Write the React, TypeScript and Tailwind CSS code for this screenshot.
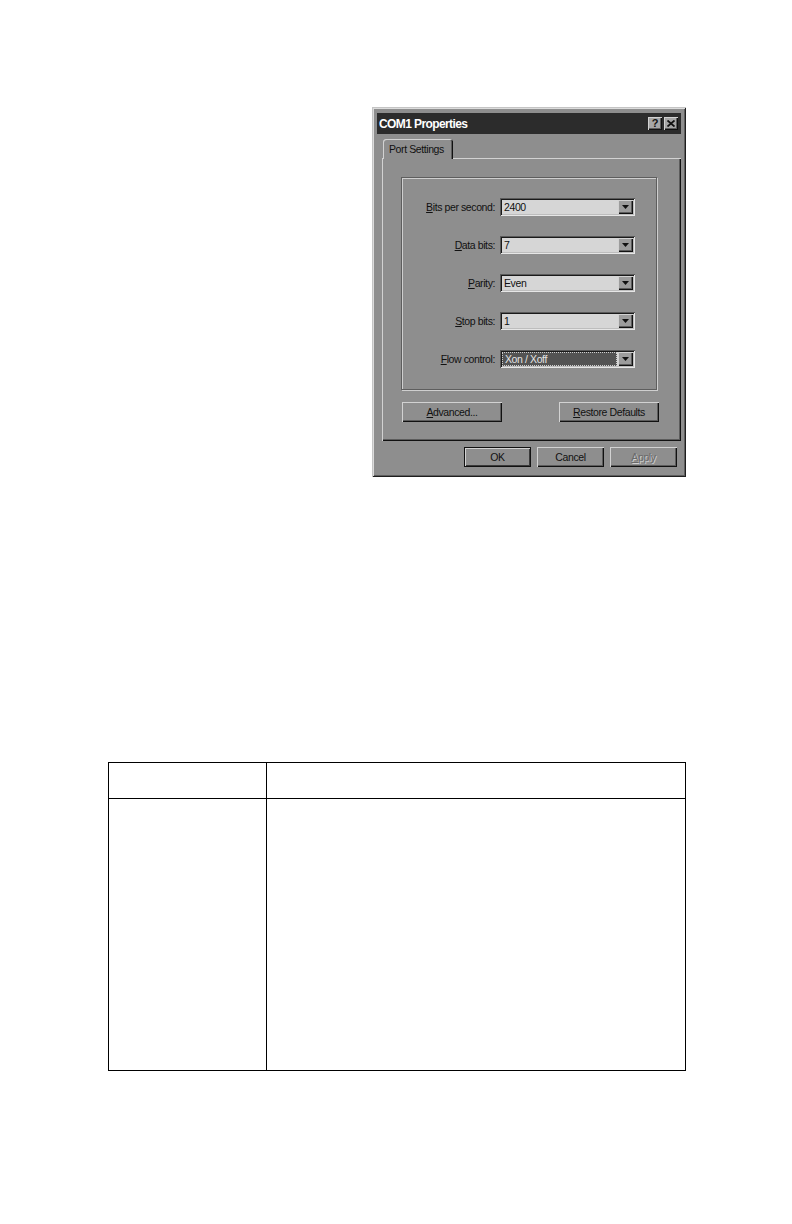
import React from 'react';

const font = "font-['Liberation_Sans',Arial,sans-serif]";

const raised =
  'shadow-[inset_1px_1px_0_#d2d2d2,inset_-1px_-1px_0_#111111,inset_-2px_-2px_0_#5c5c5c]';
const sunken =
  'shadow-[inset_1px_1px_0_#5a5a5a,inset_-1px_-1px_0_#e6e6e6,inset_2px_2px_0_#1a1a1a,inset_-2px_-2px_0_#bdbdbd]';

const Combo: React.FC<{ value: string; focused?: boolean }> = ({ value, focused }) => (
  <div className={`relative w-[135px] h-[18px] bg-[#d6d6d6] ${sunken} flex items-center`}>
    {focused ? (
      <div className="ml-[2px] h-[14px] w-[115px] bg-[#535353] border border-dotted border-[#cfcfcf] flex items-center pl-[2px] text-[#e4e4e4]">
        {value}
      </div>
    ) : (
      <span className="pl-[4px] text-[#111]">{value}</span>
    )}
    <div className={`absolute right-[2px] top-[2px] w-[15px] h-[14px] bg-[#9c9c9c] ${raised} flex items-center justify-center`}>
      <svg width="7" height="4" viewBox="0 0 7 4">
        <path d="M0 0h7L3.5 4z" fill="#111" />
      </svg>
    </div>
  </div>
);

const Row: React.FC<{ label: React.ReactNode; value: string; focused?: boolean }> = ({ label, value, focused }) => (
  <div className="flex items-center h-[18px]">
    <div className="w-[94px] text-right pr-[1px] text-[#111]">{label}</div>
    <div className="ml-[4px]">
      <Combo value={value} focused={focused} />
    </div>
  </div>
);

const Btn: React.FC<{ children: React.ReactNode; w: string; def?: boolean; disabled?: boolean }> = ({ children, w, def, disabled }) => (
  <div
    className={`${w} h-[20px] flex items-center justify-center bg-[#8e8e8e] ${
      def
        ? 'shadow-[inset_0_0_0_1px_#111111,inset_2px_2px_0_#d2d2d2,inset_-2px_-2px_0_#3a3a3a]'
        : raised
    } ${disabled ? 'text-[#6a6a6a] [text-shadow:1px_1px_0_#cfcfcf]' : 'text-[#111]'}`}
  >
    {children}
  </div>
);

export default function App() {
  return (
    <div className="w-[792px] h-[1224px] bg-white overflow-hidden">
      <div className="ml-[372px] pt-[107px]">
        <div
          className={`w-[314px] h-[370px] bg-[#8e8e8e] ${font} text-[10.5px] tracking-[-0.4px] leading-none shadow-[inset_1px_1px_0_#c4c4c4,inset_-1px_-1px_0_#1e1e1e,inset_2px_2px_0_#dcdcdc,inset_-2px_-2px_0_#5e5e5e] flex flex-col`}
        >
          {/* title bar */}
          <div className="mt-[6px] mx-[5px] h-[21px] bg-[#2c2c2c] flex items-center justify-between pl-[2px] pr-[3px]">
            <span className="text-white font-bold text-[12px] tracking-[-0.6px]">COM1 Properties</span>
            <div className="flex gap-[2px]">
              <div className={`w-[14px] h-[13px] bg-[#a6a6a6] ${raised} flex items-center justify-center text-[11px] font-bold text-[#111] tracking-normal`}>?</div>
              <div className={`w-[14px] h-[13px] bg-[#a6a6a6] ${raised} flex items-center justify-center`}>
                <svg width="8" height="7" viewBox="0 0 8 7">
                  <path d="M0.5 0.5L7.5 6.5M7.5 0.5L0.5 6.5" stroke="#111" strokeWidth="1.8" />
                </svg>
              </div>
            </div>
          </div>

          {/* tab */}
          <div className="mt-[5px] ml-[11px] relative z-10 -mb-[1px]">
            <div className="w-[70px] h-[20px] bg-[#8e8e8e] rounded-t-[3px] shadow-[inset_1px_1px_0_#d2d2d2,inset_-1px_0_0_#111111,inset_-2px_0_0_#5c5c5c] flex items-center pl-[6px] text-[#111]">
              Port Settings
            </div>
          </div>

          {/* panel */}
          <div className="ml-[10px] w-[299px] h-[283px] shadow-[inset_1px_1px_0_#d2d2d2,inset_-1px_-1px_0_#111111,inset_-2px_-2px_0_#5c5c5c] pt-[19px]">
            <div className="ml-[19px] w-[256px] h-[213px] border border-[#5e5e5e] shadow-[1px_1px_0_#cfcfcf,inset_1px_1px_0_#cfcfcf] flex flex-col gap-[20px] pt-[20px]">
              <Row label={<><u>B</u>its per second:</>} value="2400" />
              <Row label={<><u>D</u>ata bits:</>} value="7" />
              <Row label={<><u>P</u>arity:</>} value="Even" />
              <Row label={<><u>S</u>top bits:</>} value="1" />
              <Row label={<><u>F</u>low control:</>} value="Xon / Xoff" focused />
            </div>
            <div className="mt-[12px] pl-[20px] pr-[22px] flex justify-between">
              <Btn w="w-[100px]"><span><u>A</u>dvanced...</span></Btn>
              <Btn w="w-[100px]"><span><u>R</u>estore Defaults</span></Btn>
            </div>
          </div>

          {/* bottom buttons */}
          <div className="mt-[6px] pr-[9px] flex justify-end gap-[6px]">
            <Btn w="w-[67px]" def>OK</Btn>
            <Btn w="w-[67px]">Cancel</Btn>
            <Btn w="w-[67px]" disabled><span><u>A</u>pply</span></Btn>
          </div>
        </div>
      </div>

      {/* table */}
      <table className="mt-[285px] ml-[108px] w-[578px] border-collapse">
        <tbody>
          <tr className="h-[36px]">
            <td className="w-[158px] border-[1.5px] border-black"></td>
            <td className="border-[1.5px] border-black"></td>
          </tr>
          <tr className="h-[272px]">
            <td className="border-[1.5px] border-black"></td>
            <td className="border-[1.5px] border-black"></td>
          </tr>
        </tbody>
      </table>
    </div>
  );
}
